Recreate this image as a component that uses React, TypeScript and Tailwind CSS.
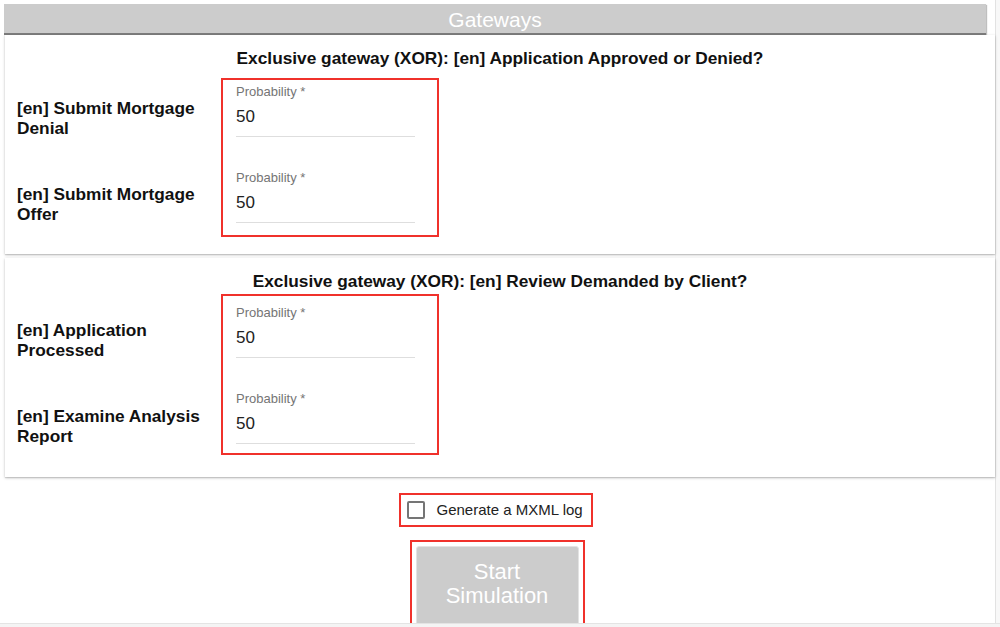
import React from "react";

interface GatewayField {
  label: string;
  value: string;
}

interface GatewayCardProps {
  title: string;
  fields: GatewayField[];
  first?: boolean;
}

function ProbabilityField({ value }: { value: string }) {
  return (
    <div className="flex flex-col">
      <div className="text-[13px] leading-[14px] text-[#757575]">Probability *</div>
      <div className="mt-[8px] text-[17px] leading-[19px] text-[#222]">{value}</div>
      <div className="mt-[10px] h-px bg-[#dedede]" />
    </div>
  );
}

function GatewayCard({ title, fields, first }: GatewayCardProps) {
  return (
    <div
      className={`ml-[5px] bg-white shadow-[0_1px_3px_rgba(0,0,0,0.2),0_1px_1px_rgba(0,0,0,0.12)] ${
        first ? "pb-[17px]" : "mt-[4px] pb-[22px]"
      }`}
    >
      <h3 className="pt-[13px] text-center text-[17.3px] leading-[20px] font-bold text-[#111]">{title}</h3>
      <div className={`flex ${first ? "mt-[10px]" : "mt-[3px]"}`}>
        <div className={`w-[216px] pl-[12px] pr-[12px] ${first ? "pt-[20px]" : "pt-[26px]"}`}>
          {fields.map((f, i) => (
            <div
              key={f.label}
              className={`text-[17.3px] leading-[20px] font-bold text-[#111] ${i > 0 ? "mt-[46px]" : ""}`}
            >
              {f.label}
            </div>
          ))}
        </div>
        <div
          className={`w-[218px] border-2 border-[#f0312b] pl-[13px] pr-[22px] ${
            first ? "pt-[5px] pb-[12px]" : "pt-[10px] pb-[9px]"
          }`}
        >
          <div className="flex flex-col gap-[34px]">
            {fields.map((f) => (
              <ProbabilityField key={f.label} value={f.value} />
            ))}
          </div>
        </div>
      </div>
    </div>
  );
}

export default function App() {
  return (
    <div
      className="flex h-[627px] w-[1000px] overflow-hidden bg-[#f8f8f8]"
      style={{ fontFamily: '"Liberation Sans", Arial, sans-serif' }}
    >
      <div className="flex w-[996px] flex-col border-r border-[#e2e2e2] bg-white">
        <div className="pt-[4px] pl-[4px]">
          <div className="flex h-[31px] w-[982px] items-start justify-center border-b-2 border-[#7c7c7c] bg-[#cccccc] shadow-[1px_1px_1px_rgba(0,0,0,0.25)]">
            <span className="mt-[4px] text-[21px] leading-[24px] text-white">Gateways</span>
          </div>
        </div>

        <GatewayCard
          first
          title="Exclusive gateway (XOR): [en] Application Approved or Denied?"
          fields={[
            { label: "[en] Submit Mortgage Denial", value: "50" },
            { label: "[en] Submit Mortgage Offer", value: "50" },
          ]}
        />
        <GatewayCard
          title="Exclusive gateway (XOR): [en] Review Demanded by Client?"
          fields={[
            { label: "[en] Application Processed", value: "50" },
            { label: "[en] Examine Analysis Report", value: "50" },
          ]}
        />

        <div className="flex flex-1 flex-col items-center pt-[16px]">
          <div className="ml-[-4px] flex h-[34px] w-[194px] items-center border-2 border-[#f0312b] pl-[6px]">
            <div className="h-[18px] w-[18px] rounded-[2px] border-2 border-[#757575]" />
            <span className="ml-[12px] text-[15px] leading-[18px] text-[#222]">Generate a MXML log</span>
          </div>
          <div className="mt-[13px] ml-[-1px] w-[175px] border-2 border-[#f0312b] px-[4px] pt-[4px]">
            <button className="flex h-[80px] w-full flex-col items-center justify-start rounded-[3px] border border-[#e3e3e3] bg-[#cccccc] pt-[13px] text-[22px] leading-[24px] text-white">
              <span>Start</span>
              <span>Simulation</span>
            </button>
          </div>
        </div>
      </div>
      <div className="absolute left-0 top-[623px] h-[4px] w-[1000px] border-t border-[#e4e4e4] bg-[#f4f4f4]" />
    </div>
  );
}
